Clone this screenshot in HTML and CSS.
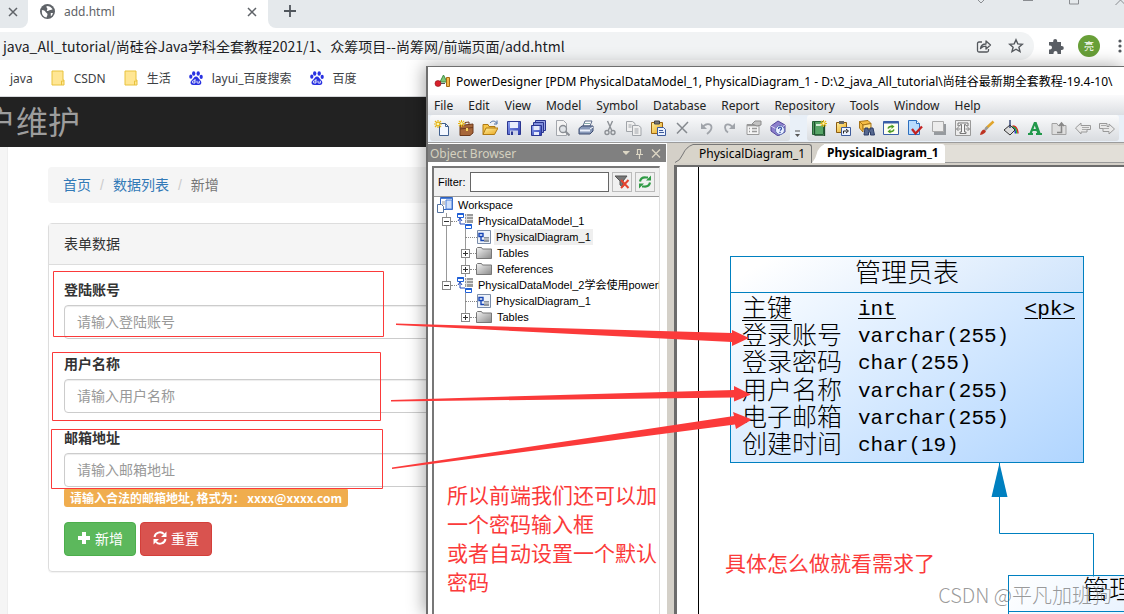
FILE: index.html
```html
<!DOCTYPE html>
<html lang="zh-CN">
<head>
<meta charset="utf-8">
<title>add.html</title>
<link rel="stylesheet" href="styles.css">
</head>
<body>
<svg class="defs" width="0" height="0" aria-hidden="true">
  <defs>
    <symbol id="close" viewBox="0 0 10 10"><path d="M1 1l8 8M9 1L1 9" fill="none" stroke="currentColor" stroke-width="1.5"/></symbol>
    <symbol id="bm-folder" viewBox="0 0 14 16"><path d="M1 1h11v9h1v5H1z" fill="#ffe694" stroke="#e8c23c"/><path d="M10.500 15v-4h2.500" fill="none" stroke="#e8c23c"/></symbol>
    <symbol id="paw" viewBox="0 0 14 14"><g fill="#2932e1"><ellipse cx="4.700" cy="2.500" rx="1.700" ry="2.300"/><ellipse cx="9.200" cy="2.500" rx="1.700" ry="2.300"/><ellipse cx="1.800" cy="5.700" rx="1.600" ry="2.100"/><ellipse cx="12.200" cy="5.900" rx="1.600" ry="2.100"/><path d="M7 5.500c2 0 2.300 2 4 3.500 2 1.700 1.800 5-1 5H4c-2.800 0-3.300-3.300-1-5C4.700 7.500 5 5.500 7 5.500z"/></g><path d="M6 8v4H4.500a1 1 0 010-2.200H6M8 9.800v1.500q0 .8.800.8h1.500V9.800" fill="none" stroke="#fff" stroke-width=".9"/></symbol>
    <symbol id="t-model" viewBox="0 0 16 16"><path d="M3 5v6h5M1 8l2-3 2 3" fill="none" stroke="#2348b8"/><path d="M.5.500h6v4h-6zM8.500 11.500h6v4h-6z" fill="#fff" stroke="#1f5fd6"/><path d="M.5 1h6M8.500 12h6" stroke="#1f5fd6" stroke-width="2"/><path d="M8 1h8v9H8z" fill="#9b9b9b"/><path d="M8 3.500h8M8 6.500h8M9.500 1v9" stroke="#e0e0e0"/></symbol>
    <symbol id="t-diagram" viewBox="0 0 14 14"><path d="M.5.500h13v13H.500z" fill="#eef3fa" stroke="#7a8ca8"/><path d="M2 3.500h4v3H2zM4 7v3.500h3" fill="none" stroke="#1745b5" stroke-width="1.400"/><path d="M7 7h5v5H7z" fill="#8e959e"/><path d="M7 9h5" stroke="#ddd"/></symbol>
    <symbol id="t-folder" viewBox="0 0 16 12"><path d="M.5 11.500v-10l1-1h4l1 1.500h9v9.500z" fill="url(#grayfold)" stroke="#777"/></symbol>
    <linearGradient id="grayfold" x1="0" y1="0" x2="1" y2="1"><stop offset="0" stop-color="#f4f4f4"/><stop offset="1" stop-color="#8a8a8a"/></linearGradient>
    <linearGradient id="gold" x1="0" y1="0" x2="1" y2="1"><stop offset="0" stop-color="#fff0a0"/><stop offset="1" stop-color="#e9a51c"/></linearGradient>
    <linearGradient id="blue" x1="0" y1="0" x2="1" y2="1"><stop offset="0" stop-color="#8fa4f2"/><stop offset="1" stop-color="#2b3bb0"/></linearGradient>
    <symbol id="spark" viewBox="0 0 8 8"><path d="M4 0v8M0 4h8M1 1l6 6M7 1L1 7" stroke="#e6b412" stroke-width="1.200"/><circle cx="4" cy="4" r="1.300" fill="#fff8b0"/></symbol>
  </defs>
</svg>

<div class="browser">
  <div class="tabs">
    <div class="tab tab-prev"><button class="plain" aria-label="关闭标签页"><svg width="10" height="10"><use href="#close"/></svg></button></div>
    <div class="tab tab-active">
      <svg width="15" height="15" viewBox="0 0 16 16"><circle cx="8" cy="8" r="8" fill="#5f6368"/><path d="M2 6.500c2 .2 3.500.8 4 2 .3 1 2 .8 2 2.500S7 13.500 7 14.500C4 14 2 11.500 2 9zM7 2c3 0 5 1.300 6.500 3.500-1 0-1.500 1-2.800 1-1 0-1.200 1-2.400 1C7 7.500 7 6 8 5.500 8.500 5 6.500 4 7 2zM11.500 9.500h2.300c-.3 1.500-1.200 2.800-2.300 3.500z" fill="#fff"/></svg>
      <span class="tab-title">add.html</span>
      <button class="plain" aria-label="关闭"><svg width="10" height="10"><use href="#close"/></svg></button>
    </div>
    <button class="plain new-tab" aria-label="新标签页"><svg width="12" height="12" viewBox="0 0 12 12"><path d="M6 0v12M0 6h12" stroke="#50565c" stroke-width="1.800"/></svg></button>
    <div class="win-buttons"><svg width="144" height="6" viewBox="0 0 144 6"><path d="M-3-1l4 4 4-4M43 .500h10M89.500-4v8h9v-8M135.500 5l5-5 5 5" fill="none" stroke="#8a8d91"/></svg></div>
  </div>
  <div class="address-row">
    <div class="omnibox">
      <span class="url">java_All_tutorial/尚硅谷Java学科全套教程2021/1、众筹项目--尚筹网/前端页面/add.html</span>
      <button class="plain" aria-label="分享"><svg width="16" height="15" viewBox="0 0 16 15"><path d="M6 3H3q-1.500 0-1.500 1.500v7Q1.500 13 3 13h8q1.500 0 1.500-1.500V10M4.500 9.500c.5-3 2.500-4.500 5.500-4.500V2l4.500 4L10 10V7.200C7.500 7.200 6 8 4.500 9.500z" fill="none" stroke="#55595e" stroke-width="1.300" stroke-linejoin="round"/></svg></button>
      <button class="plain" aria-label="收藏"><svg width="16" height="16" viewBox="0 0 16 16"><path d="M8 1.800l1.800 4.100 4.500.4-3.400 2.900 1.100 4.400L8 11.200l-4 2.400 1.100-4.400L1.700 6.300l4.500-.4z" fill="none" stroke="#55595e" stroke-width="1.400"/></svg></button>
    </div>
    <button class="plain" aria-label="扩展程序"><svg width="16" height="16" viewBox="0 0 16 16"><path d="M1 4h4.200V3a2 2 0 114 0v1H13v4h.8a2 2 0 110 4H13v4H9.500v-1a2 2 0 10-4 0v1H1v-4.500h1a2 2 0 100-4H1z" fill="#5a5e64"/></svg></button>
    <span class="avatar">亮</span>
    <button class="plain" aria-label="菜单"><svg width="4" height="14" viewBox="0 0 4 14"><g fill="#55595e"><circle cx="2" cy="2" r="1.600"/><circle cx="2" cy="7" r="1.600"/><circle cx="2" cy="12" r="1.600"/></g></svg></button>
  </div>
  <div class="bookmarks">
    <a href="#" class="bm bm-cut">java</a>
    <a href="#" class="bm"><svg width="14" height="16"><use href="#bm-folder"/></svg>CSDN</a>
    <a href="#" class="bm"><svg width="14" height="16"><use href="#bm-folder"/></svg>生活</a>
    <a href="#" class="bm"><svg width="14" height="14"><use href="#paw"/></svg>layui_百度搜索</a>
    <a href="#" class="bm"><svg width="14" height="14"><use href="#paw"/></svg>百度</a>
  </div>
  <div class="navbar"><h1>户维护</h1></div>
  <div class="page">
    <div class="sidebar"></div>
    <main class="main">
      <nav class="breadcrumb"><a href="#">首页</a><i>/</i><a href="#">数据列表</a><i>/</i><span>新增</span></nav>
      <section class="panel">
        <div class="panel-head">表单数据</div>
        <form class="panel-body">
          <div class="field"><label for="acct">登陆账号</label><input id="acct" type="text" placeholder="请输入登陆账号"></div>
          <div class="field"><label for="uname">用户名称</label><input id="uname" type="text" placeholder="请输入用户名称"></div>
          <div class="field"><label for="mail">邮箱地址</label><input id="mail" type="email" placeholder="请输入邮箱地址">
            <p class="hint">请输入合法的邮箱地址, 格式为： xxxx@xxxx.com</p></div>
          <div class="actions">
            <button type="button" class="btn add"><svg width="14" height="14" viewBox="0 0 14 14"><path d="M5 1h4v4h4v4H9v4H5V9H1V5h4z" fill="#fff"/></svg>新增</button>
            <button type="reset" class="btn reset"><svg width="14" height="14" viewBox="0 0 14 14"><path d="M1.500 6A5.500 5.500 0 0111 3.200M12.500 8A5.500 5.500 0 013 10.800" fill="none" stroke="#fff" stroke-width="2"/><path d="M13.500.500v5.500H8zM.5 13.500V8H6z" fill="#fff"/></svg>重置</button>
          </div>
        </form>
      </section>
    </main>
  </div>
</div>

<div class="designer">
  <div class="titlebar">
    <svg width="17" height="14" viewBox="0 0 17 14"><path d="M6 8l3.500-7L13 8z" fill="#7fc77a" stroke="#3f8c43"/><path d="M12.500 3.500h3v9h-3z" fill="#f5b94b" stroke="#a46a14"/><circle cx="4" cy="9.500" r="3" fill="#d8202b" stroke="#8c1218" stroke-width=".6"/><path d="M7 9.500h4" stroke="#555"/></svg>
    <span>PowerDesigner [PDM PhysicalDataModel_1, PhysicalDiagram_1 - D:\2_java_All_tutorial\尚硅谷最新期全套教程-19.4-10\</span>
  </div>
  <div class="menubar">
    <button>File</button><button>Edit</button><button>View</button><button>Model</button><button>Symbol</button><button>Database</button><button>Report</button><button>Repository</button><button>Tools</button><button>Window</button><button>Help</button>
  </div>
  <div class="toolbar">
    <div class="tools">
      <button aria-label="New"><svg viewBox="0 0 16 16"><path d="M5.500 3.500h6l3 3v9h-9z" fill="#f3f7ff" stroke="#41608f"/><path d="M11.500 3.500v3h3" fill="none" stroke="#41608f"/><use href="#spark" width="8" height="8"/></svg></button>
      <button aria-label="New project"><svg viewBox="0 0 16 16"><path d="M2 5.500l13-1.500v9l-3 2.500H2z" fill="#a7673a" stroke="#6d3a1d"/><path d="M2 9l13-1.500M7 4V2.500l4-.5v2" fill="none" stroke="#6d3a1d"/><path d="M8 8h2v3H8z" fill="#f6d25c"/><use href="#spark" width="7" height="7"/></svg></button>
      <button aria-label="Open"><svg viewBox="0 0 16 16"><path d="M1 14.500v-10h5l1 2h6v2" fill="#f6c64a" stroke="#b07a13"/><path d="M1 14.500L4 8h12l-3.500 6.500z" fill="url(#gold)" stroke="#b07a13"/><path d="M8 3c2-2.500 5-2.500 6.500 0M15 .500V4h-3" fill="none" stroke="#4a6ca0"/></svg></button>
      <button aria-label="Save"><svg viewBox="0 0 16 16"><path d="M1.500 1.500h13v13h-13z" fill="url(#blue)" stroke="#2b3690"/><path d="M4 2h8v6H4z" fill="#e8eefc"/><path d="M4 10.500h8V15H4z" fill="#cdd3e8"/><path d="M5 11.500h2V15H5z" fill="#2b3690"/></svg></button>
      <button aria-label="Save all"><svg viewBox="0 0 16 16"><path d="M5.500.5h10v10h-10z" fill="#9aa6e6" stroke="#2b3690"/><path d="M3.500 2.500h10v10h-10z" fill="#7f8edc" stroke="#2b3690"/><path d="M1.500 5.500h10v10h-10z" fill="url(#blue)" stroke="#2b3690"/><path d="M3.500 6h6v4h-6zM4 12h5v3H4z" fill="#e5eafb"/></svg></button>
      <button aria-label="Preview"><svg viewBox="0 0 16 16"><path d="M2.500.500h7l3 3v12h-10z" fill="#f4f4f4" stroke="#a3a7ad"/><circle cx="9" cy="9" r="3.500" fill="#e0e4e8" stroke="#8a8e94" stroke-width="1.300"/><path d="M11.500 11.500l4 4" stroke="#8a8e94" stroke-width="2"/></svg></button>
      <button aria-label="Print"><svg viewBox="0 0 16 16"><path d="M5 6l2-5h7l-2 5z" fill="#fff" stroke="#5a6a88"/><path d="M1 8.500L4 6h11v5l-3 3H1z" fill="#8798b8" stroke="#3c4c70"/><path d="M2 9.500h10v2H2z" fill="#eaf0fb"/><path d="M12 9l3-2" stroke="#fff"/><path d="M6 3.500h6" stroke="#8aa"/></svg></button>
      <button aria-label="Cut"><svg viewBox="0 0 16 16"><path d="M5.500 1L10 11M10.500 1L6 11" stroke="#8d9196" stroke-width="1.400"/><circle cx="5" cy="12.500" r="2" fill="none" stroke="#8d9196" stroke-width="1.400"/><circle cx="11" cy="12.500" r="2" fill="none" stroke="#8d9196" stroke-width="1.400"/></svg></button>
      <button aria-label="Copy"><svg viewBox="0 0 16 16"><path d="M.5 1.500h6l2.500 2v8H.500z" fill="#f0f0f0" stroke="#a0a4a9"/><path d="M6.500 5.500h6l2.500 2v8H6.500z" fill="#f0f0f0" stroke="#a0a4a9"/><path d="M2.500 5h3M2.500 7h3M8.500 9h4M8.500 11h4M8.500 13h4" stroke="#a0a4a9"/></svg></button>
      <button aria-label="Paste"><svg viewBox="0 0 16 16"><path d="M1.500 2.500h11v11h-11z" fill="url(#gold)" stroke="#9b6410"/><path d="M4.500 1h5v3h-5z" fill="#777" stroke="#444"/><path d="M7.500 7.500h6l2 2v6h-8z" fill="#eaf1ff" stroke="#3d5b9b"/><path d="M9 10.500h4M9 12.500h5" stroke="#3d5b9b"/></svg></button>
      <button aria-label="Delete"><svg viewBox="0 0 16 16"><path d="M3 3l10 10M14 2L3 13.500" fill="none" stroke="#85898e" stroke-width="1.500"/></svg></button>
      <button aria-label="Undo"><svg viewBox="0 0 16 16"><path d="M4 8c3-5 9-5 9.500-1 .3 3-2 5-4.500 7" fill="none" stroke="#a0a4aa" stroke-width="1.800"/><path d="M3 3v6h6z" fill="#a0a4aa"/></svg></button>
      <button aria-label="Redo"><svg viewBox="0 0 16 16"><path d="M11 8C8 3 3 3.500 3 7.500c0 2 1 3.500 3 5" fill="none" stroke="#a0a4aa" stroke-width="1.800"/><path d="M13 3v6H7z" fill="#a0a4aa"/></svg></button>
      <button aria-label="Properties"><svg viewBox="0 0 16 16"><path d="M1 4.500h12v10H1z" fill="#f5f5f5" stroke="#999"/><path d="M1 5.500h12M3 8.500h1M6 8.500h5M3 11.500h1M6 11.500h5" stroke="#999" stroke-width="1.500"/><path d="M6 4l3-3h6v4l-4 1z" fill="#c2c2c2" stroke="#8c8c8c"/></svg></button>
      <button aria-label="Help"><svg viewBox="0 0 16 16"><path d="M1 6l7-5 7 4v7l-7 4-7-5z" fill="#8d7fcb" stroke="#53479a"/><path d="M1 6l7 4 7-5" fill="none" stroke="#d9d3f4"/><circle cx="10" cy="10" r="4.500" fill="#e9efff" stroke="#6474b8"/><path d="M8.500 9q0-1.800 1.500-1.800T11.500 8.500Q11.500 9.500 10 10.500M10 11.700v1.300" fill="none" stroke="#3850a8" stroke-width="1.300"/></svg></button>
    </div>
    <svg class="overflow" width="7" height="8" viewBox="0 0 7 8"><path d="M1 1h5" stroke="#555"/><path d="M1 4h5L3.500 7z" fill="#555"/></svg>
    <div class="tools">
      <button aria-label="Model"><svg viewBox="0 0 16 16"><path d="M1.500 1.500h11v13h-11z" fill="#58a668" stroke="#276338"/><path d="M3.500 2v13M13.500 4v12h-10" fill="none" stroke="#204f2e" stroke-width="1.300"/><path d="M5 4h6v2H5z" fill="#d6ecd8"/><use href="#spark" x="9" width="7" height="7"/></svg></button>
      <button aria-label="Shortcut"><svg viewBox="0 0 16 16"><path d="M1.500 2.500h10v10h-10z" fill="url(#gold)" stroke="#8b5b10"/><path d="M4 1h5v3H4z" fill="#666"/><path d="M6.500 7.500h9v8h-9z" fill="#eef4ff" stroke="#3d5b9b"/><path d="M8.500 13.500V11h4M11 9l2.500 2-2.500 2" fill="none" stroke="#222"/></svg></button>
      <button aria-label="Find"><svg viewBox="0 0 16 16"><path d="M.5 1.500L9 .500l3 3-8 1.500zM4 5v7L.5 8V1.500z" fill="#f5bd45" stroke="#a87416"/><path d="M4 5l8-1.500V9H4z" fill="#ffdf85" stroke="#a87416"/><path d="M6 8h3v2h2V8h3l1.500 7h-4v-3h-2v3H5z" fill="#56688f" stroke="#2c3c66"/></svg></button>
      <button aria-label="Refresh"><svg viewBox="0 0 16 16"><path d="M.5 1.500h15v13H.500z" fill="#fffff0" stroke="#3b5fa8"/><path d="M.5 2.500h15" stroke="#3b5fa8" stroke-width="2"/><path d="M5 8.500Q6 6 9 6.500M11 9.500Q10 12 7 11.500" fill="none" stroke="#4f9c24" stroke-width="1.600"/><path d="M8.500 4.500l3 2-3 2.500zM7.500 9l-3 2.500 3 2z" fill="#4f9c24"/></svg></button>
      <button aria-label="Check"><svg viewBox="0 0 16 16"><path d="M1.500.500h8l3 3v11h-11z" fill="#b9dcff" stroke="#2d6fbf"/><path d="M9.500.500v3h3" fill="#fff" stroke="#2d6fbf"/><path d="M5 9l3.500 4.500L15 6.500" fill="none" stroke="#c32222" stroke-width="2.300"/></svg></button>
      <button aria-label="Shadow"><svg viewBox="0 0 16 16"><path d="M3 4h12v11H3z" fill="#969a9e"/><path d="M1.500 1.500h11v10h-11z" fill="#ececec" stroke="#aaa"/></svg></button>
      <button aria-label="Text box"><svg viewBox="0 0 16 16"><path d="M.5.500h15v15H.500z" fill="#ececec" stroke="#999"/><path d="M3 3h10v3h-1.500q0-1.500-2-1.500V12H11v1.500H5V12h1.500V4.500q-2 0-2 1.500H3z" fill="#f8f8f8" stroke="#777"/><path d="M1.500 9h4M10.500 9h4M3.500 7L1.500 9l2 2M12.500 7l2 2-2 2" fill="none" stroke="#888"/></svg></button>
      <button aria-label="Brush"><svg viewBox="0 0 16 16"><path d="M14.500 1.500L7 8.500" stroke="#e0a52c" stroke-width="2.500"/><path d="M8.500 7L6 10" stroke="#999" stroke-width="2.600"/><path d="M1 15q1-5 4-5.500l2 1.500q-1 3-6 4z" fill="#bd3423"/></svg></button>
      <button aria-label="Fill"><svg viewBox="0 0 16 16"><path d="M9.500 6q5 0 5.500 7.500" fill="none" stroke="#d22" stroke-width="1.400"/><path d="M9 7q4.500 0 4.700 6.500" fill="none" stroke="#2b3" stroke-width="1.400"/><path d="M9 8q3.200 0 3.400 5.500" fill="none" stroke="#23c" stroke-width="1.400"/><path d="M1 10l6-5 5 5-5 5z" fill="#dcdcdc" stroke="#333"/><path d="M7 0v8" stroke="#223366" stroke-width="1.300"/></svg></button>
      <button aria-label="Font color"><svg viewBox="0 0 16 16"><path d="M1 13h1.500L7 2h2.500l4 11H15v2H9v-2h1.200l-.8-2H5.700L5 13h1v2H1zM6.500 9h2.400L7.800 5.500z" fill="#21984a"/></svg></button>
      <button aria-label="Up folder"><svg viewBox="0 0 16 16"><path d="M1 14.500v-11h5l1 2h8v9z" fill="#dedede" stroke="#a2a2a2"/><path d="M6 12.500h4.500V4M8 6l2.500-3L13 6" fill="none" stroke="#888" stroke-width="1.600"/></svg></button>
      <button aria-label="Back"><svg viewBox="0 0 16 16"><path d="M.5 8L6 3v2.500h9.500v4H12V12H6v2z" fill="#e9e9e9" stroke="#999"/><path d="M7 9.500h5M7 7.500h7" stroke="#aaa"/></svg></button>
      <button aria-label="Forward"><svg viewBox="0 0 16 16"><path d="M15.500 9L10 4v2.500H8v-3H.5v5H4v3h6V14z" fill="#e9e9e9" stroke="#999"/><path d="M2 5.500h5M4 8.500h6" stroke="#aaa"/></svg></button>
    </div>
  </div>
  <div class="workarea">
    <aside class="object-browser">
      <div class="ob-head"><span>Object Browser</span>
        <svg width="38" height="11" viewBox="0 0 38 11"><g fill="none" stroke="#dcd6c4"><path d="M13 6.500h7M16.500 7v4M14.500 6.500v-5h3v5" stroke-width="1.200"/><path d="M29 1.500l8 8M37 1.500l-8 8" stroke-width="1.300"/></g><path d="M-1 3h8L3 7z" fill="#dcd6c4"/></svg>
      </div>
      <div class="ob-body">
        <div class="filter"><label for="filter">Filter:</label><input id="filter" type="text">
          <button aria-label="Clear filter"><svg width="15" height="14" viewBox="0 0 15 14"><path d="M0 1h12L8 6v6l-3-2V6z" fill="#777" stroke="#555"/><path d="M6 5l7.500 8M13.500 5L6 13" stroke="#e5432e" stroke-width="2"/></svg></button>
          <button aria-label="Refresh"><svg width="14" height="14" viewBox="0 0 14 14"><path d="M2 6.500Q3 2 8 2.500h2M12 7.500Q11 12 6 11.500H4" fill="none" stroke="#2f9a45" stroke-width="2.200"/><path d="M8 5.500h5v-5zM6 8.500H1v5z" fill="#2f9a45"/></svg></button>
        </div>
        <ul class="tree">
          <li class="l0"><svg width="16" height="16" viewBox="0 0 16 16"><path d="M3.500.500h12v12h-12z" fill="#fff" stroke="#2e62c0"/><path d="M3.500 1.500h12M9 3h6v9H9z" fill="#cfe0fb" stroke="#4d7fd6"/><path d="M5 5h3M5 7h3" stroke="#999"/><path d="M.5 7.500h4l2 2v6h-6z" fill="#fff" stroke="#55729f"/></svg><span>Workspace</span></li>
          <li class="l1"><i class="box"></i><i class="dots"></i><svg width="16" height="16"><use href="#t-model"/></svg><span>PhysicalDataModel_1</span></li>
          <li class="l2"><i class="stub"></i><svg width="14" height="14"><use href="#t-diagram"/></svg><span class="sel">PhysicalDiagram_1</span></li>
          <li class="l2"><i class="box plus"></i><i class="dots"></i><svg width="16" height="12"><use href="#t-folder"/></svg><span>Tables</span></li>
          <li class="l2"><i class="box plus"></i><i class="dots"></i><svg width="16" height="12"><use href="#t-folder"/></svg><span>References</span></li>
          <li class="l1 end"><i class="box"></i><i class="dots"></i><svg width="16" height="16"><use href="#t-model"/></svg><span>PhysicalDataModel_2学会使用powerl</span></li>
          <li class="l2 last"><i class="stub"></i><svg width="14" height="14"><use href="#t-diagram"/></svg><span>PhysicalDiagram_1</span></li>
          <li class="l2 last end"><i class="box plus"></i><i class="dots"></i><svg width="16" height="12"><use href="#t-folder"/></svg><span>Tables</span></li>
        </ul>
      </div>
    </aside>
    <section class="diagram-pane">
      <div class="doc-tabs">
        <svg class="slope" width="18" height="19" viewBox="0 0 18 19"><path d="M0 19Q5 18 8 11T17 .5H18V19z" fill="#d8d4ca"/><path d="M0 18.500Q5 17 8 10T18 .5" fill="none" stroke="#777"/></svg><button class="doc">PhysicalDiagram_1</button><svg class="slope" width="12" height="19" viewBox="0 0 12 19"><path d="M0 19Q4 14 5 9T12 .5V19z" fill="#fff"/></svg><button class="doc on">PhysicalDiagram_1</button><span class="rest"></span>
      </div>
      <div class="canvas">
        <table class="entity manager">
          <caption>管理员表</caption>
          <tbody>
            <tr class="key"><td><u>主键</u></td><td><u>int</u></td><td><u>&lt;pk&gt;</u></td></tr>
            <tr><td>登录账号</td><td>varchar(255)</td><td></td></tr>
            <tr><td>登录密码</td><td>char(255)</td><td></td></tr>
            <tr><td>用户名称</td><td>varchar(255)</td><td></td></tr>
            <tr><td>电子邮箱</td><td>varchar(255)</td><td></td></tr>
            <tr><td>创建时间</td><td>char(19)</td><td></td></tr>
          </tbody>
        </table>
        <div class="entity second"><div class="name">管理</div></div>
        <svg class="link" width="102" height="114" viewBox="0 0 102 114"><path d="M8.500 0v70.500h94v43" fill="none" stroke="#0080c0"/><path d="M8.500 0l8 34h-16z" fill="#0080c0"/></svg>
      </div>
    </section>
  </div>
</div>

<div class="notes">
  <svg width="1124" height="614" viewBox="0 0 1124 614">
    <g fill="none" stroke="#fb3a3a"><path d="M53.500 271.500h330v65h-330zM52.500 352.500h328v68h-328zM51.500 429.500h331v59h-331z"/></g>
    <g fill="#fb3a3a">
      <path d="M396 323.500L732 333v-3l17 8-17 8v-4L396 325z"/>
      <path d="M391 400L734 390v-4l17 8.500-17 7v-4L391 401.500z"/>
      <path d="M392 467.500L734 416l-1-4 19 7.500-16 9.500-1-4.500L392 469z"/>
    </g>
  </svg>
  <p class="note left">所以前端我们还可以加<br>一个密码输入框<br>或者自动设置一个默认<br>密码</p>
  <p class="note right">具体怎么做就看需求了</p>
  <p class="watermark">CSDN @平凡加班狗</p>
</div>
</body>
</html>
```

FILE: styles.css
```css
* { box-sizing: border-box; }
html, body { height: 100%; }
body {
  margin: 0;
  position: relative;
  overflow: hidden;
  background: #fff;
  font-family: "Noto Sans", "Noto Sans CJK SC", sans-serif;
  font-size: 12px;
  color: #333;
}
.defs { position: absolute; }
svg { display: block; flex: none; }
button { font-family: inherit; font-size: inherit; color: inherit; }
p, h1, ul { margin: 0; padding: 0; }
.plain { border: 0; padding: 0; background: none; color: #5f6368; }

/* browser chrome */
.browser { display: flex; flex-direction: column; height: 100%; }
.tabs { display: flex; height: 28px; background: #fff; overflow: hidden; }
.tab { display: flex; align-items: center; padding-bottom: 5px; }
.tab-prev { width: 28px; padding-left: 8px; background: #e5e9ec; border-radius: 0 0 8px 0; }
.tab-active { width: 240px; padding-left: 12px; padding-right: 11px; background: #fff; gap: 9px; }
.tab-title { flex: 1; color: #5f6368; }
.new-tab { width: 44px; padding: 0 16px 6px; background: #e5e9ec; border-radius: 0 0 0 8px; }
.win-buttons { flex: 1; display: flex; justify-content: flex-end; align-items: flex-start; background: #e5e9ec; }
.win-buttons svg { overflow: visible; }
.address-row { display: flex; align-items: center; height: 36px; padding: 4px 2px 4px 0; gap: 14px; }
.omnibox { flex: 1; display: flex; align-items: center; gap: 16px; height: 28px; padding: 0 10px 0 3px; background: #f1f3f4; border-radius: 0 14px 14px 0; }
.url { flex: 1; font-family: "Noto Sans CJK SC", sans-serif; font-size: 14px; color: #202124; white-space: nowrap; }
.avatar { width: 22px; height: 22px; border-radius: 50%; background: #689f38; color: #fff; font-size: 10px; line-height: 22px; text-align: center; }
.address-row > .plain:last-child { margin-left: 4px; }
.bookmarks { display: flex; align-items: center; gap: 18px; height: 33px; padding: 0 10px 4px; border-bottom: 1px solid #d7d9dc; }
.bm { display: flex; align-items: center; gap: 9px; color: #3c4043; text-decoration: none; white-space: nowrap; }

/* web page */
.navbar { display: flex; align-items: center; height: 50px; background: #222; overflow: hidden; }
.navbar h1 { margin-left: -16px; font-size: 32px; line-height: 40px; font-weight: 400; color: #9d9d9d; }
.page { flex: 1; display: flex; font-family: "Liberation Sans", "Noto Sans CJK SC", sans-serif; font-size: 14px; line-height: 20px; }
.sidebar { width: 8px; background: #f5f5f5; border-right: 1px solid #eee; }
.main { flex: 1; padding: 20px 40px; }
.breadcrumb { display: flex; padding: 8px 15px; margin-bottom: 20px; background: #f5f5f5; border-radius: 4px; color: #777; }
.breadcrumb a { color: #337ab7; text-decoration: none; }
.breadcrumb i { padding: 0 9px; font-style: normal; color: #ccc; }
.panel { border: 1px solid #ddd; border-radius: 4px; box-shadow: 0 1px 1px rgba(0,0,0,.05); }
.panel-head { padding: 10px 15px; background: #f5f5f5; border-bottom: 1px solid #ddd; }
.panel-body { padding: 15px; }
.field { margin-bottom: 15px; }
.field label { display: block; margin-bottom: 5px; font-weight: 700; }
.field input { display: block; width: 100%; height: 34px; padding: 6px 12px; border: 1px solid #ccc; border-radius: 4px; font: inherit; box-shadow: inset 0 1px 1px rgba(0,0,0,.075); }
.field input::placeholder { color: #999; }
.hint { width: max-content; margin-top: 1px; padding: 0 6px; border-radius: 3px; background: #f0ad4e; color: #fff; font-size: 12px; font-weight: 700; line-height: 19px; font-family: "Noto Sans CJK SC", sans-serif; }
.actions { display: flex; gap: 4px; }
.btn { display: flex; align-items: center; gap: 4px; height: 34px; padding: 0 12px 2px; color: #fff; font-size: 14px; border: 1px solid; border-radius: 4px; }
.btn.add { background: #5cb85c; border-color: #4cae4c; }
.btn.reset { background: #d9534f; border-color: #d43f3a; }

/* modelling tool window, lying over the browser */
.designer { position: absolute; left: 426px; top: 66px; right: 0; bottom: 0; display: flex; flex-direction: column; border: 2px solid #6f6f6f; border-width: 1px 0 0 2px; background: #d4d0c8; box-shadow: -2px 0 16px rgba(0,0,0,.35); overflow: hidden; color: #111; }
.titlebar { display: flex; align-items: center; gap: 5px; height: 28px; padding-left: 6px; background: #fff; color: #000; white-space: nowrap; }
.menubar { display: flex; gap: 15px; height: 20px; padding-left: 6px; background: linear-gradient(#fbfbfc, #dcdfe3); }
.menubar button { padding: 0; border: 0; background: none; color: #222; }
.toolbar { display: flex; align-items: center; height: 28px; padding: 0 4px 1px 2px; background: #e9f0f8; border-bottom: 1px solid #9b9b9b; }
.tools { display: flex; height: 26px; border-radius: 3px; background: linear-gradient(#fafbfc, #d9dce0); }
.tools button { width: 24px; padding: 0 4px; border: 0; background: none; }
.tools svg { width: 16px; height: 16px; }
.overflow { margin: 12px 6px 0 4px; }
.workarea { flex: 1; display: flex; min-height: 0; }
.object-browser { display: flex; flex-direction: column; width: 239px; background: #fff; border-right: 1px solid #fff; }
.ob-head { display: flex; align-items: center; justify-content: space-between; height: 18px; margin-top: 1px; padding: 0 5px 0 2px; background: #808080; color: #d4d0bf; }
.ob-body { flex: 1; display: flex; flex-direction: column; margin: 4px 6px 0 4px; border: 1px solid #777; border-width: 2px 1px 0 2px; border-right-color: #ddd; overflow: hidden; font-family: "Liberation Sans", "Noto Sans CJK SC", sans-serif; font-size: 11px; color: #000; }
.filter { display: flex; align-items: center; height: 29px; padding: 0 4px; background: #f0f0f0; border-bottom: 1px solid #999; }
.filter label { width: 32px; white-space: nowrap; }
.filter input { flex: 1; min-width: 0; height: 20px; border: 1px solid #666; background: #fff; }
.filter button { display: grid; place-items: center; width: 20px; height: 20px; margin-left: 3px; padding: 0; border: 1px solid #bbb; background: #f0f0f0; }
.tree { list-style: none; flex: 1; background: #fff; }
.tree li { display: flex; align-items: center; height: 16px; white-space: nowrap; }
.tree i { flex: none; }
.tree span { margin-left: 3px; padding: 0 2px; line-height: 16px; }
.tree .sel { background: #efefef; }
.l0 { padding-left: 3px; }
.tree .l1 { padding-left: 8px; background: linear-gradient(#999, #999) 12px 0 / 1px 16px no-repeat; }
.tree .l1.end { background-size: 1px 8px; }
.tree .l2 { padding-left: 27px; background: linear-gradient(#999, #999) 12px 0 / 1px 16px no-repeat, linear-gradient(#999, #999) 31px 0 / 1px 16px no-repeat; }
.tree .last { background: linear-gradient(#999, #999) 31px 0 / 1px 16px no-repeat; }
.tree .last.end { background-size: 1px 8px; }
.box { width: 9px; height: 9px; border: 1px solid #888; background: linear-gradient(#333, #333) center / 5px 1px no-repeat, #fff; }
.plus { background: linear-gradient(#333, #333) center / 5px 1px no-repeat, linear-gradient(#333, #333) center / 1px 5px no-repeat, #fff; }
.dots { width: 6px; border-top: 1px dotted #888; }
.stub { width: 12px; margin-left: 4px; border-top: 1px dotted #888; }
.diagram-pane { flex: 1; display: flex; flex-direction: column; min-width: 0; margin-left: 7px; }
.doc-tabs { display: flex; align-items: flex-end; height: 20px; padding-left: 1px; }
.doc { height: 19px; padding: 0 6px 2px; border: 1px solid #777; border-width: 1px 1px 0 0; background: #d8d4ca; border-radius: 0 3px 0 0; color: #000; }
.doc-tabs .on { padding: 0 6px 2px 3px; border: 0; background: #fff; font-weight: 700; }
.rest { flex: 1; height: 18px; background: #e2dfd8; border-bottom: 1px solid #999; }
.canvas { position: relative; flex: 1; margin-top: 2px; border: 2px solid #6c6c6c; border-width: 2px 0 0 3px; background: linear-gradient(#000, #000) 21px 0 / 1px 100% no-repeat, #fff; overflow: hidden; color: #000; }
.entity { position: absolute; width: 354px; border: 1px solid #0080c0; background: linear-gradient(135deg, #fff, #b0d5ff); font-family: "Liberation Mono", "Noto Sans CJK SC", monospace; font-size: 21px; font-weight: 300; }
.manager { left: 53px; top: 89px; height: 170px; border-collapse: separate; border-spacing: 0; border-top: 0; background: linear-gradient(145deg, #fbfdff, #b0d5ff); }
.manager caption { height: 37px; padding-top: 2px; border: 1px solid #0080c0; background: linear-gradient(150deg, #fff 10%, #cfe4fc); font-size: 26px; line-height: 33px; }
.manager tbody::after { content: ""; display: table-row; height: 6px; }
.manager td { height: 27px; padding: 6px 0 0; line-height: 21px; vertical-align: middle; white-space: nowrap; }
.manager td:first-child { width: 127px; padding: 0 0 0 11px; font-family: "Noto Sans CJK SC", sans-serif; font-size: 25px; line-height: 27px; }
.manager td:last-child { padding-right: 8px; text-align: right; }
.manager u { text-underline-offset: 3px; text-decoration-thickness: 1px; }
.second { left: 331px; top: 408px; height: 207px; }
.name { height: 36px; padding-left: 74px; border-bottom: 1px solid #0080c0; font-size: 26px; line-height: 33px; white-space: nowrap; }
.link { position: absolute; left: 314px; top: 296px; overflow: visible; }

/* hand-drawn marks on top of everything */
.notes { position: absolute; inset: 0; overflow: hidden; pointer-events: none; font-family: "Noto Sans CJK SC", sans-serif; }
.note { position: absolute; color: #fb3a3a; font-size: 21px; line-height: 29px; white-space: nowrap; }
.left { left: 447px; top: 480px; }
.right { left: 725px; top: 548px; }
.watermark { position: absolute; right: 12px; bottom: 4px; color: rgba(110,110,110,.7); font-size: 20px; font-weight: 300; line-height: 30px; }
```
